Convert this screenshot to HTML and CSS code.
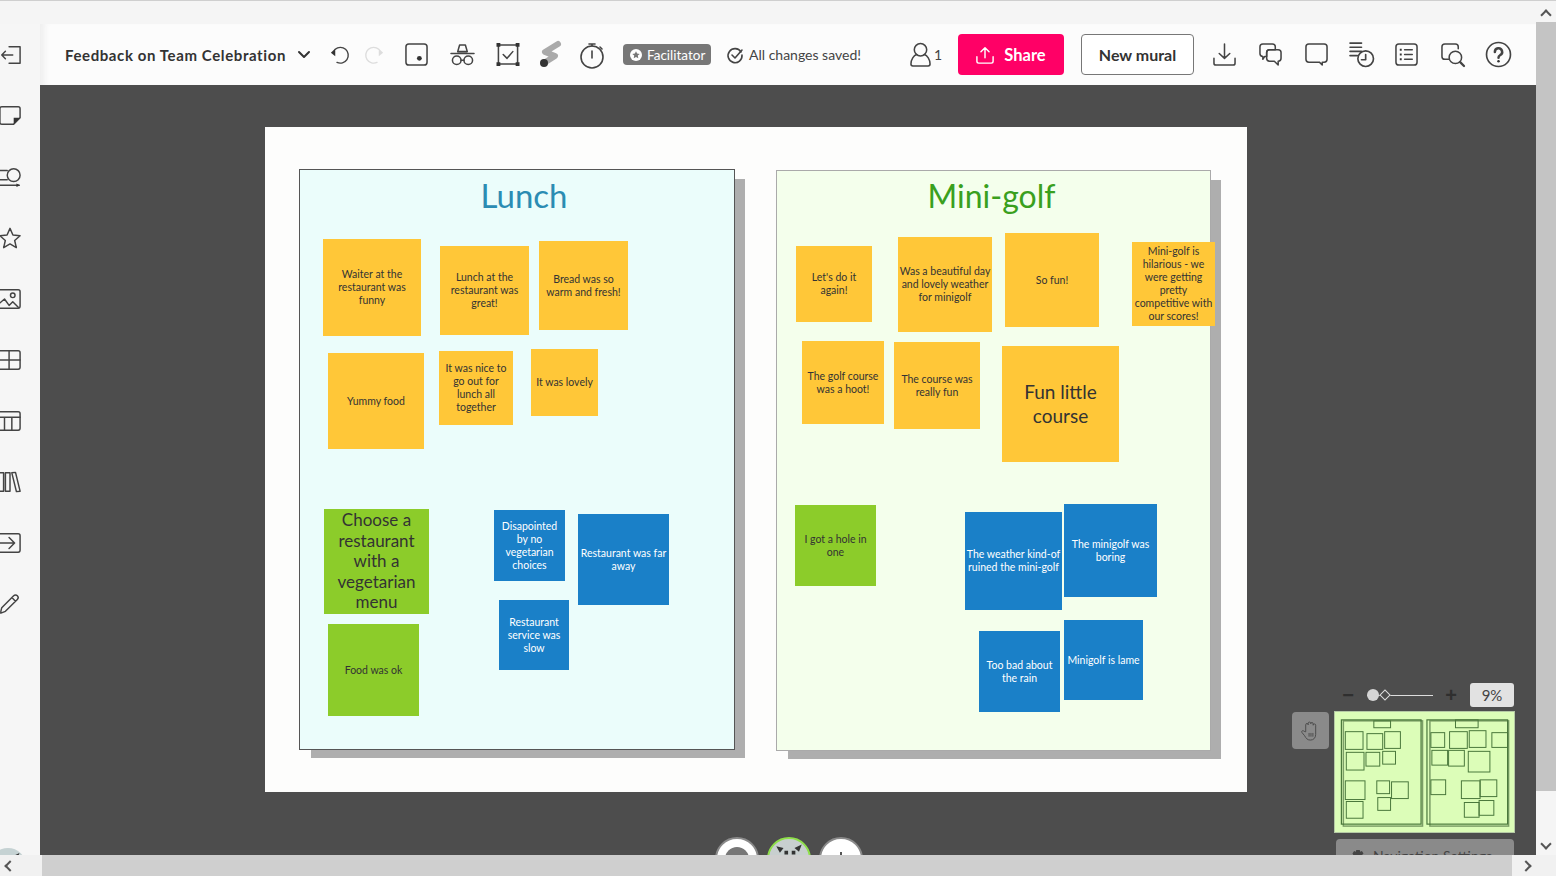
FILE: index.html
```html
<!DOCTYPE html>
<html lang="en">
<head>
    <meta charset="UTF-8">
    <meta name="viewport" content="width=device-width, initial-scale=1.0">
    <title>Feedback on Team Celebration</title>
    <link rel="stylesheet" href="styles.css">
</head>
<body>
    <div class="window">
        <div class="top-strip"></div>
        <div class="workspace">
            <aside class="sidebar">
                <svg class="side-icon" viewBox="0 0 24 24"><path d="M11 3h12v18H11M15 12H3M7 8l-4 4 4 4"/></svg>
                <svg class="side-icon" viewBox="0 0 24 24"><path d="M3 2h18a2 2 0 0 1 2 2v10l-7 7H3a2 2 0 0 1-2-2V4a2 2 0 0 1 2-2z"/><path class="solid" d="M23 14l-7 7v-7z"/></svg>
                <svg class="side-icon" viewBox="0 0 24 24"><circle cx="16" cy="10" r="7"/><path d="M9 5H-1M9 15H-1M-1 21H22"/><path class="solid" d="M19 19l4 2-4 2z"/></svg>
                <svg class="side-icon" viewBox="0 0 24 24"><path d="M12 1.5l3.2 7.2 7.8.8-5.9 5.2 1.8 7.8-6.900-4-6.900 4 1.800-7.800L1 9.500l7.800-.8z"/></svg>
                <svg class="side-icon" viewBox="0 0 24 24"><rect x="-1" y="2" width="24" height="20" rx="2"/><circle cx="15" cy="8" r="2.500"/><path d="M-1 18l7-6 5 7 4-4 6 6"/></svg>
                <svg class="side-icon" viewBox="0 0 24 24"><rect x="-1" y="2" width="24" height="20" rx="2"/><path d="M-1 12h24M11 2v20"/></svg>
                <svg class="side-icon" viewBox="0 0 24 24"><rect x="-1" y="2" width="24" height="20" rx="2"/><path d="M-1 8h24M6 8v14M14 8v14"/></svg>
                <svg class="side-icon" viewBox="0 0 24 24"><path d="M0 2h5v20H0zM7 2h5v20H7zM14 2l4-.5L23 22l-4 .5z"/></svg>
                <svg class="side-icon" viewBox="0 0 24 24"><rect x="-1" y="2" width="24" height="20" rx="2"/><path d="M-2 12h18M11 6l6 6-6 6"/></svg>
                <svg class="side-icon" viewBox="0 0 24 24"><path d="M2 20l1-4L16 3a2.500 2.500 0 0 1 4 4L7 20l-5 2zM14 5l4 4"/></svg>
                <div class="side-avatar">
                    <svg viewBox="0 0 44 44"><path class="solid" d="M8 8l8 2-4 5zM36 6l-8 4 5 4zM17 17h4v4h-4zM26 17h4v4h-4zM21 24h5v4h-5z"/></svg>
                </div>
            </aside>
            <main class="main">
                <header class="toolbar">
                    <div class="mural-title">Feedback on Team Celebration</div>
                    <svg class="chevron" viewBox="0 0 14 10"><path d="M2 2l5 5 5-5"/></svg>
                    <svg class="undo" viewBox="0 0 24 24"><path d="M6 6a9 9 0 1 1 2 15"/><path class="solid" d="M1 10l5-5v9z"/></svg>
                    <svg class="redo" viewBox="0 0 24 24"><path d="M18 6a9 9 0 1 0-2 15"/><path class="solid" d="M23 10l-5-5v9z"/></svg>
                    <svg class="tool" viewBox="0 0 24 24"><rect x="1" y="1" width="22" height="22" rx="3"/><circle class="solid" cx="15" cy="16" r="2.500"/></svg>
                    <svg class="tool hat" viewBox="0 0 24 24"><path d="M7 9l2-7h6l2 7zM0 11h24"/><circle cx="6" cy="18" r="4.500"/><circle cx="18" cy="18" r="4.500"/><path d="M10.500 18h3"/></svg>
                    <svg class="tool select" viewBox="0 0 24 24"><rect x="2" y="2" width="20" height="20"/><path d="M7 12l4 4 6-7"/><path class="solid" d="M0 0h4v4H0zM20 0h4v4h-4zM0 20h4v4H0zM20 20h4v4h-4z"/></svg>
                    <svg class="tool brush-icon" viewBox="0 0 20 24"><path class="brush" d="M18 1L5 9l10 4L4 20"/><circle class="solid" cx="4" cy="20" r="4"/></svg>
                    <svg class="tool timer" viewBox="0 0 24 24"><circle cx="12" cy="14" r="11"/><path d="M12 8v7M9 1h6M12 1v2M20 4l2 2"/></svg>
                    <div class="facilitator">
                        <svg viewBox="0 0 12 12"><circle cx="6" cy="6" r="6" fill="#fff"/><path d="M6 2.200l1.100 2.400 2.600.3-1.900 1.700.5 2.600L6 7.900 3.700 9.200l.5-2.600L2.300 4.900l2.600-.3z" fill="#777"/></svg>
                        <span>Facilitator</span>
                    </div>
                    <div class="saved">
                        <svg viewBox="0 0 16 16"><path d="M14 5a7 7 0 1 0 1 3"/><path d="M5 8l3 3 7-8"/></svg>
                        <span>All changes saved!</span>
                    </div>
                    <div class="people">
                        <svg viewBox="0 0 22 26"><circle cx="11" cy="8" r="6.500"/><path d="M7 13c-3 1-6 5-6 10a2 2 0 0 0 2 2h16a2 2 0 0 0 2-2c0-5-3-9-6-10"/></svg>
                        <span>1</span>
                    </div>
                    <button class="share-btn">
                        <svg viewBox="0 0 20 20"><path d="M10 13V2M5.500 6.500L10 2l4.500 4.500M1 12v5a2 2 0 0 0 2 2h14a2 2 0 0 0 2-2v-5"/></svg>
                        Share
                    </button>
                    <button class="new-btn">New mural</button>
                    <svg class="tool right" viewBox="0 0 24 24"><path d="M12 1v15M6.500 11l5.500 5 5.500-5M1 16v5a2 2 0 0 0 2 2h18a2 2 0 0 0 2-2v-5"/></svg>
                    <svg class="tool right" viewBox="0 0 24 24"><path d="M4 1h10a3 3 0 0 1 3 3v3H11a3 3 0 0 0-3 3v4H6l-2 3v-3a3 3 0 0 1-3-3V4a3 3 0 0 1 3-3z"/><path d="M11 7h9a3 3 0 0 1 3 3v6a3 3 0 0 1-3 3v4l-4-4h-5a3 3 0 0 1-3-3v-6a3 3 0 0 1 3-3z"/></svg>
                    <svg class="tool right comment" viewBox="0 0 24 24"><path d="M4 1h16a3 3 0 0 1 3 3v13a3 3 0 0 1-3 3h-2v3l-3-3H4a3 3 0 0 1-3-3V4a3 3 0 0 1 3-3z"/></svg>
                    <svg class="tool right activity" viewBox="0 0 24 24"><path d="M1 1h11M1 5h11M1 9h11M1 13h7"/><circle cx="16" cy="16" r="7.500"/><path d="M16 12v5h-4"/></svg>
                    <svg class="tool right" viewBox="0 0 24 24"><rect x="1" y="1" width="22" height="22" rx="3"/><path d="M10 7h8M10 12h8M10 17h8"/><path class="solid" d="M5 6h2v2H5zM5 11h2v2H5zM5 16h2v2H5z"/></svg>
                    <svg class="tool right search" viewBox="0 0 24 24"><path d="M8 17H4a3 3 0 0 1-3-3V4a3 3 0 0 1 3-3h11a3 3 0 0 1 3 3v2"/><circle cx="15" cy="15" r="6.500"/><path class="thick" d="M20 20l4 4"/></svg>
                    <svg class="tool right help" viewBox="0 0 24 24"><circle cx="12" cy="12" r="11.500"/><path class="thick" d="M8.500 9.500a3.500 3.500 0 1 1 5 3.200c-1 .6-1.500 1.100-1.500 2.300"/><circle class="solid" cx="12" cy="18.500" r="1.200"/></svg>
                </header>

                <div class="canvas">
                    <div class="board">
                        <section class="area area-lunch">
                            <h2>Lunch</h2>
                        </section>
                        <section class="area area-golf">
                            <h2>Mini-golf</h2>
                        </section>

                        <div class="note yellow n1">Waiter at the restaurant was funny</div>
                        <div class="note yellow n2">Lunch at the restaurant was great!</div>
                        <div class="note yellow n3">Bread was so warm and fresh!</div>
                        <div class="note yellow n4">Yummy food</div>
                        <div class="note yellow n5">It was nice to go out for lunch all together</div>
                        <div class="note yellow n6">It was lovely</div>
                        <div class="note green big n7">Choose a restaurant with a vegetarian menu</div>
                        <div class="note green n8">Food was ok</div>
                        <div class="note blue n9">Disapointed by no vegetarian choices</div>
                        <div class="note blue n10">Restaurant was far away</div>
                        <div class="note blue n11">Restaurant service was slow</div>

                        <div class="note yellow n12">Let's do it again!</div>
                        <div class="note yellow n13">Was a beautiful day and lovely weather for minigolf</div>
                        <div class="note yellow n14">So fun!</div>
                        <div class="note yellow n15">Mini-golf is hilarious - we were getting pretty competitive with our scores!</div>
                        <div class="note yellow n16">The golf course was a hoot!</div>
                        <div class="note yellow n17">The course was really fun</div>
                        <div class="note yellow big n18">Fun little course</div>
                        <div class="note green n19">I got a hole in one</div>
                        <div class="note blue n20">The weather kind-of ruined the mini-golf</div>
                        <div class="note blue n21">The minigolf was boring</div>
                        <div class="note blue n22">Too bad about the rain</div>
                        <div class="note blue n23">Minigolf is lame</div>
                    </div>

                    <div class="avatars">
                        <div class="round-btn"><span class="grey-dot"></span></div>
                        <div class="round-btn me">
                            <svg viewBox="0 0 44 44"><path class="solid" d="M8 8l8 2-4 5zM36 6l-8 4 5 4zM17 13h4v4h-4zM25 13h4v4h-4zM20 19h6v4h-6z"/></svg>
                        </div>
                        <div class="round-btn plus"></div>
                    </div>

                    <div class="nav-panel">
                        <div class="zoom-row">
                            <span class="zoom-sign">&minus;</span>
                            <div class="slider"><span class="knob"></span><span class="diamond"></span></div>
                            <span class="zoom-sign">+</span>
                            <div class="zoom-value">9%</div>
                        </div>
                        <div class="map-row">
                            <div class="hand-btn">
                                <svg viewBox="0 0 24 24"><path d="M7 13V6a1.300 1.300 0 0 1 2.600 0V4.500a1.300 1.300 0 0 1 2.600 0V5a1.300 1.300 0 0 1 2.600 0v1.500a1.300 1.300 0 0 1 2.600 0V16c0 4-2.500 6-5.500 6-3.500 0-4.500-2-6-4.500L3 14c-.8-1.400 1-2.500 2-1.500zM10.500 15v3M12.500 15v3M14.500 15v3"/></svg>
                            </div>
                            <svg class="minimap" viewBox="0 0 181 122">
                                <rect class="mm-shadow" x="8" y="9" width="80.500" height="107"/>
                                <rect class="mm-area" x="6" y="8" width="81" height="106"/>
                                <rect class="mm-shadow" x="96" y="9" width="80" height="107"/>
                                <rect class="mm-area" x="93" y="8" width="82" height="106"/>
                                <rect x="39" y="9" width="17" height="7"/><rect x="10" y="20" width="18" height="18"/><rect x="32" y="22" width="16" height="16"/><rect x="50" y="20" width="16" height="17"/>
                                <rect x="11" y="41" width="18" height="18"/><rect x="31" y="41" width="14" height="14"/><rect x="48" y="40" width="13" height="13"/>
                                <rect x="10" y="70" width="20" height="19"/><rect x="42" y="70" width="13" height="13"/><rect x="57" y="71" width="17" height="17"/><rect x="11" y="91" width="17" height="17"/><rect x="43" y="87" width="13" height="13"/>
                                <rect x="122" y="8" width="23" height="8"/><rect x="97" y="21" width="14" height="15"/><rect x="116" y="20" width="18" height="17"/><rect x="136" y="19" width="17" height="17"/><rect x="159" y="21" width="16" height="15"/>
                                <rect x="98" y="39" width="16" height="15"/><rect x="115" y="39" width="16" height="16"/><rect x="135" y="40" width="22" height="21"/>
                                <rect x="97" y="69" width="15" height="15"/><rect x="128" y="70" width="19" height="18"/><rect x="147" y="69" width="17" height="17"/><rect x="131" y="92" width="15" height="15"/><rect x="146" y="90" width="15" height="15"/>
                            </svg>
                        </div>
                        <div class="nav-settings">
                            <svg viewBox="0 0 16 16"><path d="M6 1h4l.5 2 2-.8 1.800 2.800-1.500 1.500.700 1.500 1.500 1.500-2 3-2-.8-.5 2.300H6l-.5-2.300-2 .8-2-3L3 7.500 1.700 5l1.800-2.800 2 .8z"/></svg>
                            Navigation Settings
                        </div>
                    </div>
                </div>
            </main>
            <div class="v-scroll">
                <span class="arrow up"></span>
                <div class="v-track"><div class="v-thumb"></div></div>
                <span class="arrow down"></span>
            </div>
        </div>
        <div class="h-scroll">
            <div class="h-end"><span class="arrow left"></span></div>
            <div class="h-thumb"></div>
            <div class="h-end right-end"><span class="arrow right-arrow"></span></div>
        </div>
    </div>
</body>
</html>
```

FILE: styles.css
```css
* {
    box-sizing: border-box;
}

body {
    margin: 0;
    font-family: Lato, "Liberation Sans", sans-serif;
    color: #333;
    background-color: #f5f5f5;
    overflow: hidden;
}

svg {
    fill: none;
    stroke: #444;
    stroke-width: 1.6;
    stroke-linecap: round;
    stroke-linejoin: round;
    overflow: visible;
}

svg .solid {
    fill: #333;
    stroke: none;
}

svg .thick {
    stroke-width: 2.4;
}

.window {
    width: 1556px;
    height: 876px;
    display: flex;
    flex-direction: column;
}

.top-strip {
    height: 24px;
    flex: none;
    background-color: #f5f5f5;
    border-top: 1px solid #cfcfcf;
}

.workspace {
    flex: 1;
    display: flex;
    min-height: 0;
}

/* left tools, cut off by the window edge */
.sidebar {
    width: 40px;
    flex: none;
    background-color: #f6f6f6;
    display: flex;
    flex-direction: column;
    align-items: flex-end;
    padding: 20px 19px 0 0;
    gap: 39px;
    position: relative;
    overflow: hidden;
}

.side-icon {
    width: 22px;
    height: 22px;
    flex: none;
}

.side-avatar {
    position: absolute;
    left: -10px;
    top: 824px;
    width: 36px;
    height: 36px;
    border-radius: 50%;
    background-color: #c5d2d3;
}

.side-avatar svg {
    display: block;
    width: 36px;
    height: 36px;
}

.main {
    flex: 1;
    display: flex;
    flex-direction: column;
    min-width: 0;
}

.toolbar {
    height: 61px;
    flex: none;
    background-color: #fcfcfc;
    box-shadow: inset 8px 0 6px -4px #eee;
    display: flex;
    align-items: center;
    padding-left: 25px;
}

.mural-title {
    font-size: 15px;
    font-weight: 700;
    color: #333;
    letter-spacing: 0.6px;
    white-space: nowrap;
    width: 232px;
}

.chevron {
    width: 14px;
    height: 10px;
    flex: none;
    stroke: #333;
    stroke-width: 2;
    margin-right: 19px;
}

.undo {
    width: 21px;
    height: 21px;
    flex: none;
    margin-right: 12px;
}

.redo {
    width: 21px;
    height: 21px;
    flex: none;
    margin-right: 21px;
    stroke: #ddd;
}

.redo .solid {
    fill: #ddd;
}

.tool {
    width: 23px;
    height: 23px;
    flex: none;
    margin-right: 22px;
}

.hat {
    width: 25px;
    margin-right: 21px;
}

.select {
    width: 24px;
    margin-right: 20px;
}

.brush-icon {
    width: 20px;
    height: 24px;
    margin-right: 20px;
}

.timer {
    width: 24px;
    height: 24px;
    margin-right: 19px;
}

.tool.right {
    margin-right: 23px;
}

.tool.comment {
    margin-right: 21px;
}

.tool.activity {
    width: 25px;
    height: 25px;
    margin-right: 21px;
}

.tool.search {
    margin-right: 22px;
}

.tool.help {
    width: 25px;
    height: 25px;
    margin-right: 0;
}

.brush {
    stroke: #aaa;
    stroke-width: 6;
}

.facilitator {
    height: 21px;
    width: 88px;
    flex: none;
    border-radius: 4px;
    background-color: #777;
    color: #fff;
    font-size: 13.500px;
    display: flex;
    align-items: center;
    gap: 5px;
    padding-left: 7px;
}

.facilitator svg {
    width: 12px;
    height: 12px;
    stroke: none;
}

.saved {
    display: flex;
    align-items: center;
    gap: 6px;
    margin-left: 16px;
    width: 183px;
    flex: none;
    font-size: 14px;
    color: #444;
}

.saved svg {
    width: 16px;
    height: 16px;
    flex: none;
}

.people {
    display: flex;
    align-items: center;
    gap: 3px;
    width: 48px;
    flex: none;
    font-size: 14px;
    color: #444;
}

.people svg {
    width: 21px;
    height: 25px;
    flex: none;
}

.share-btn {
    width: 106px;
    height: 41px;
    flex: none;
    border: none;
    border-radius: 4px;
    background-color: #ff0066;
    color: #fff;
    font-family: inherit;
    font-size: 16.500px;
    font-weight: 700;
    display: flex;
    align-items: center;
    justify-content: center;
    gap: 10px;
    padding: 0;
}

.share-btn svg {
    width: 18px;
    height: 18px;
    stroke: #fff;
}

.new-btn {
    width: 113px;
    height: 41px;
    flex: none;
    margin-left: 17px;
    margin-right: 19px;
    border: 1px solid #777;
    border-radius: 4px;
    background-color: #fff;
    color: #333;
    font-family: inherit;
    font-size: 16px;
    font-weight: 700;
    padding: 0;
}

.canvas {
    flex: 1;
    background-color: #4d4d4d;
    position: relative;
    overflow: hidden;
}

/* the mural itself: a free canvas, everything placed by coordinates */
.board {
    position: absolute;
    left: 225px;
    top: 42px;
    width: 982px;
    height: 665px;
    background-color: #fdfdfc;
}

.area {
    position: absolute;
    border: 1px solid #555;
    box-shadow: 11px 9px 0 -1px #aeaeae;
}

.area h2 {
    margin: 0;
    font-size: 32px;
    font-weight: 400;
    text-align: center;
    line-height: 36px;
    padding-top: 7px;
}

.area-lunch {
    left: 34px;
    top: 42px;
    width: 436px;
    height: 581px;
    background-color: #ebfdfb;
}

.area-lunch h2 {
    color: #2b8cb3;
    font-size: 33px;
    padding-left: 14px;
}

.area-golf {
    left: 511px;
    top: 43px;
    width: 435px;
    height: 581px;
    background-color: #f4ffec;
    border-color: #aaa;
}

.area-golf h2 {
    color: #3aa01e;
    padding-right: 4px;
}

.note {
    position: absolute;
    display: flex;
    align-items: center;
    justify-content: center;
    text-align: center;
    font-size: 10.500px;
    line-height: 13px;
    padding: 0 2px;
    color: #333;
}

.yellow {
    background-color: #ffc738;
}

.green {
    background-color: #8ccc2a;
}

.blue {
    background-color: #1a80c8;
    color: #fff;
}

.big {
    font-size: 17px;
    line-height: 20.500px;
}

.n1 { left: 58px; top: 112px; width: 98px; height: 97px; padding: 0 12px; }
.n2 { left: 175px; top: 119px; width: 89px; height: 89px; padding: 0 8px; }
.n3 { left: 274px; top: 114px; width: 89px; height: 89px; padding: 0 4px; }
.n4 { left: 63px; top: 226px; width: 96px; height: 96px; }
.n5 { left: 174px; top: 224px; width: 74px; height: 74px; padding: 0 4px; }
.n6 { left: 266px; top: 222px; width: 67px; height: 67px; }
.n7 { left: 59px; top: 382px; width: 105px; height: 105px; padding: 0 3px; }
.n8 { left: 63px; top: 497px; width: 91px; height: 92px; }
.n9 { left: 229px; top: 383px; width: 71px; height: 71px; padding: 0 6px; }
.n10 { left: 313px; top: 387px; width: 91px; height: 91px; }
.n11 { left: 234px; top: 473px; width: 70px; height: 70px; padding: 0 6px; }
.n12 { left: 531px; top: 119px; width: 76px; height: 76px; padding: 0 8px; }
.n13 { left: 633px; top: 110px; width: 94px; height: 95px; padding: 0 1px; }
.n14 { left: 740px; top: 106px; width: 94px; height: 94px; }
.n15 { left: 867px; top: 115px; width: 83px; height: 84px; }
.n16 { left: 537px; top: 214px; width: 82px; height: 83px; }
.n17 { left: 629px; top: 215px; width: 86px; height: 87px; padding: 0 6px; }
.n18 { left: 737px; top: 219px; width: 117px; height: 116px; padding: 0 14px; font-size: 19px; line-height: 24px; }
.n19 { left: 530px; top: 378px; width: 81px; height: 81px; padding: 0 8px; }
.n20 { left: 700px; top: 385px; width: 97px; height: 98px; padding: 0; }
.n21 { left: 799px; top: 377px; width: 93px; height: 93px; padding: 0 6px; }
.n22 { left: 714px; top: 504px; width: 81px; height: 81px; padding: 0 6px; }
.n23 { left: 799px; top: 493px; width: 79px; height: 80px; }

.avatars {
    position: absolute;
    left: 675px;
    top: 752px;
    display: flex;
    gap: 8px;
}

.round-btn {
    width: 44px;
    height: 44px;
    flex: none;
    border-radius: 50%;
    background-color: #fff;
    border: 2px solid #8a8a8a;
    display: flex;
    justify-content: center;
    align-items: center;
    position: relative;
}

.grey-dot {
    width: 24px;
    height: 24px;
    border-radius: 50%;
    background-color: #777;
}

.me {
    background-color: #c8cfcf;
    border-color: #8fe04a;
}

.me svg {
    width: 40px;
    height: 40px;
}

.plus::before {
    content: "";
    position: absolute;
    left: 19px;
    top: 13px;
    width: 2px;
    height: 14px;
    background-color: #555;
}

/* navigation panel sits over the canvas, bottom right */
.nav-panel {
    position: absolute;
    left: 1252px;
    top: 598px;
    width: 223px;
}

.zoom-row {
    display: flex;
    align-items: center;
    height: 24px;
    padding-left: 50px;
}

.zoom-sign {
    width: 12px;
    flex: none;
    font-family: "Liberation Sans", sans-serif;
    font-size: 20px;
    font-weight: 700;
    color: #2f2f2f;
    text-align: center;
    line-height: 20px;
}

.slider {
    width: 66px;
    height: 1px;
    margin: 0 12px 0 13px;
    background-color: #ddd;
    position: relative;
    flex: none;
}

.knob {
    position: absolute;
    left: 0;
    top: -5.500px;
    width: 12px;
    height: 12px;
    border-radius: 50%;
    background-color: #d5d5d5;
}

.diamond {
    position: absolute;
    left: 14px;
    top: -3.500px;
    width: 8px;
    height: 8px;
    transform: rotate(45deg);
    background-color: #4d4d4d;
    border: 1px solid #ddd;
}

.zoom-value {
    width: 44px;
    height: 24px;
    flex: none;
    margin-left: 13px;
    border-radius: 3px;
    background-color: #e2e2e2;
    color: #444;
    font-size: 15px;
    text-align: center;
    line-height: 25px;
}

.map-row {
    display: flex;
    align-items: flex-start;
    gap: 5px;
    margin-top: 4px;
}

.hand-btn {
    width: 37px;
    height: 37px;
    flex: none;
    margin-top: 1px;
    border-radius: 4px;
    background-color: #8a8a8a;
    display: flex;
    align-items: center;
    justify-content: center;
}

.hand-btn svg {
    width: 23px;
    height: 23px;
    stroke: #4a4a4a;
    stroke-width: 1;
}

.minimap {
    width: 181px;
    height: 122px;
    flex: none;
    background-color: #dcfdb8;
    border: 1px solid #b5c9a5;
    stroke: #48763a;
    stroke-width: 1;
    stroke-linecap: butt;
    stroke-linejoin: miter;
}

.mm-area {
    stroke-width: 1.200;
}

.mm-shadow {
    stroke: #7b9e66;
    stroke-width: 1.500;
}

.nav-settings {
    width: 178px;
    height: 40px;
    margin: 6px 0 0 44px;
    border-radius: 4px 4px 0 0;
    background-color: #8a8a8a;
    color: #444;
    font-size: 14px;
    display: flex;
    align-items: flex-start;
    gap: 8px;
    padding: 8px 0 0 15px;
    white-space: nowrap;
}

.nav-settings svg {
    width: 14px;
    height: 14px;
    fill: #444;
    stroke: none;
    margin-top: 2px;
    flex: none;
}

/* scrollbars */
.v-scroll {
    width: 20px;
    flex: none;
    background-color: #f5f5f5;
    display: flex;
    flex-direction: column;
    align-items: center;
    margin-top: -23px;
    position: relative;
}

.v-track {
    flex: 1;
    width: 100%;
}

.v-thumb {
    width: 100%;
    height: 769px;
    margin-top: 3px;
    background-color: #c4c4c4;
}

.arrow {
    width: 8px;
    height: 8px;
    flex: none;
    border: solid #555;
    border-width: 2.500px 0 0 2.500px;
    display: block;
}

.up {
    margin-top: 10px;
    transform: rotate(45deg);
}

.down {
    margin-bottom: 7px;
    transform: rotate(225deg);
}

.h-scroll {
    height: 21px;
    flex: none;
    display: flex;
    background-color: #cfcfcf;
}

.h-end {
    width: 42px;
    flex: none;
    background-color: #f1f1f1;
    display: flex;
    align-items: center;
    padding-left: 6px;
}

.right-end {
    width: 44px;
    justify-content: flex-end;
    padding: 0 26px 0 0;
}

.h-thumb {
    flex: 1;
}

.left {
    transform: rotate(-45deg);
}

.right-arrow {
    transform: rotate(135deg);
}
```
